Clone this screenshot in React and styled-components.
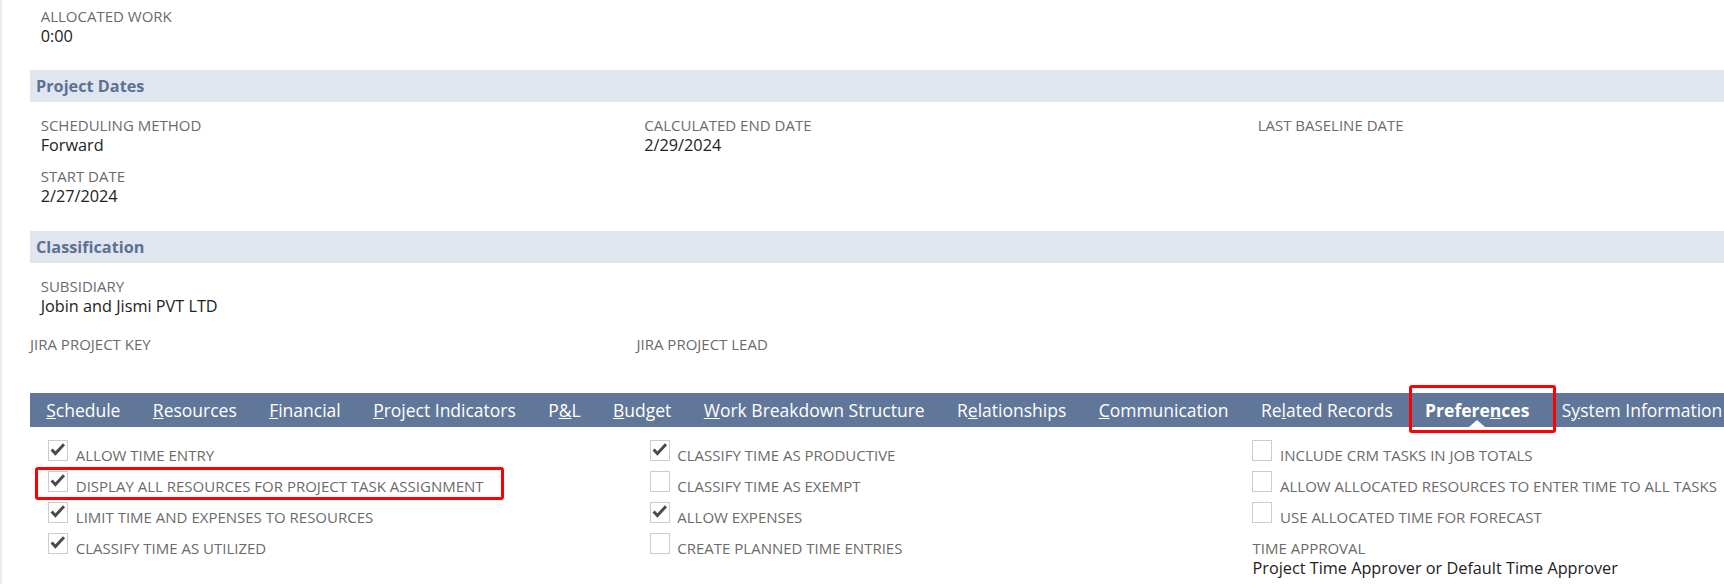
import React from 'react'
import styled, { createGlobalStyle } from 'styled-components'

const LABEL = '#6b6b6b'
const VALUE = '#222222'
const HEADER_BG = '#e0e6ef'
const HEADER_TEXT = '#5d7192'
const TAB_BG = '#607799'
const MARK_RED = '#ff0000'

const GlobalStyle = createGlobalStyle`
  html, body {
    margin: 0;
    padding: 0;
    background: #ffffff;
  }
  body {
    font-family: 'Open Sans', 'Liberation Sans', sans-serif;
    overflow: hidden;
  }
`

const Page = styled.div`
  width: 1724px;
  height: 584px;
  overflow: hidden;
  box-sizing: border-box;
  border-left: 2px solid #ececec;
  padding: 7px 0 0 28px;
`

const FieldGrid = styled.div`
  display: grid;
  grid-template-columns: ${p => p.$cols};
  padding-left: ${p => p.$inset || 0}px;
  margin-top: ${p => p.$top || 0}px;
`

const FieldColumn = styled.div`
  display: flex;
  flex-direction: column;
  gap: 11.5px;
`

const Field = styled.div`
  display: flex;
  flex-direction: column;
  margin-top: ${p => p.$top || 0}px;
`

const Label = styled.div`
  font-size: 15px;
  line-height: 19px;
  color: ${LABEL};
  text-transform: uppercase;
  white-space: nowrap;
`

const Value = styled.div`
  font-size: 16.25px;
  line-height: 21px;
  min-height: 21px;
  color: ${VALUE};
  white-space: nowrap;
`

const SectionHeader = styled.div`
  height: 32px;
  margin-top: ${p => p.$top}px;
  display: flex;
  align-items: center;
  padding-left: 6px;
  background: ${HEADER_BG};
  color: ${HEADER_TEXT};
  font-size: 16.25px;
  font-weight: 700;
`

const TabBar = styled.div`
  display: flex;
  height: 34.5px;
  margin-top: 18px;
  background: ${TAB_BG};
  white-space: nowrap;
`

const Tab = styled.div`
  position: relative;
  flex-shrink: 0;
  display: flex;
  align-items: center;
  padding: 0 16.2px;
  color: #ffffff;
  font-size: 17.5px;
  font-weight: ${p => (p.$active ? 700 : 400)};
`

const Caret = styled.span`
  position: absolute;
  bottom: 0;
  left: 50%;
  transform: translateX(-50%);
  border-left: 8px solid transparent;
  border-right: 8px solid transparent;
  border-bottom: 7px solid #ffffff;
`

const TabMark = styled.span`
  position: absolute;
  left: 0;
  right: -10.5px;
  top: -8px;
  bottom: -5.5px;
  border: 3px solid ${MARK_RED};
  border-radius: 3px;
  pointer-events: none;
`

const CheckGrid = styled.div`
  display: grid;
  grid-template-columns: 601.5px 602.7px 1fr;
  padding-left: 18.3px;
  margin-top: 13px;
`

const CheckColumn = styled.div`
  display: flex;
  flex-direction: column;
`

const CheckRow = styled.div`
  position: relative;
  display: flex;
  align-items: flex-start;
  height: 31px;
`

const Box = styled.span`
  flex-shrink: 0;
  width: 20px;
  height: 21px;
  box-sizing: border-box;
  border: 1px solid #cccccc;
  background: #ffffff;
  display: flex;
`

const CheckLabel = styled.span`
  margin: 6px 0 0 7.5px;
  font-size: 15px;
  line-height: 19px;
  color: ${LABEL};
  white-space: nowrap;
`

const RowMark = styled.span`
  position: absolute;
  left: -13.3px;
  top: -4.3px;
  width: 469px;
  height: 33.5px;
  box-sizing: border-box;
  border: 3px solid ${MARK_RED};
  border-radius: 3px;
  pointer-events: none;
`

const tabs = [
  ['Schedule', 0],
  ['Resources', 0],
  ['Financial', 0],
  ['Project Indicators', 0],
  ['P&L', 1],
  ['Budget', 0],
  ['Work Breakdown Structure', 0],
  ['Relationships', 1],
  ['Communication', 0],
  ['Related Records', 2],
  ['Preferences', 7],
  ['System Information', 1],
]

const checkColumns = [
  [
    ['ALLOW TIME ENTRY', true],
    ['DISPLAY ALL RESOURCES FOR PROJECT TASK ASSIGNMENT', true, true],
    ['LIMIT TIME AND EXPENSES TO RESOURCES', true],
    ['CLASSIFY TIME AS UTILIZED', true],
  ],
  [
    ['CLASSIFY TIME AS PRODUCTIVE', true],
    ['CLASSIFY TIME AS EXEMPT', false],
    ['ALLOW EXPENSES', true],
    ['CREATE PLANNED TIME ENTRIES', false],
  ],
  [
    ['INCLUDE CRM TASKS IN JOB TOTALS', false],
    ['ALLOW ALLOCATED RESOURCES TO ENTER TIME TO ALL TASKS', false],
    ['USE ALLOCATED TIME FOR FORECAST', false],
  ],
]

const CheckIcon = () => (
  <svg width="18" height="19" viewBox="0 0 18 19">
    <path
      d="M2.6 8.6 L6.4 12.6 L15 3.2"
      fill="none"
      stroke="#4a4a4a"
      strokeWidth="2.9"
      strokeLinejoin="miter"
    />
  </svg>
)

const AccessKey = ({ text, at }) => (
  <>
    {text.slice(0, at)}
    <u>{text[at]}</u>
    {text.slice(at + 1)}
  </>
)

const Checkbox = ({ text, checked, marked }) => (
  <CheckRow>
    <Box>{checked && <CheckIcon />}</Box>
    <CheckLabel>{text}</CheckLabel>
    {marked && <RowMark />}
  </CheckRow>
)

export default function App() {
  return (
    <Page>
      <GlobalStyle />
      <FieldGrid $cols="603.6px 1fr" $inset={10.7}>
        <Field>
          <Label>Allocated Work</Label>
          <Value>0:00</Value>
        </Field>
      </FieldGrid>

      <SectionHeader $top={23}>Project Dates</SectionHeader>
      <FieldGrid $cols="603.6px 613.4px 1fr" $inset={10.7} $top={13.5}>
        <FieldColumn>
          <Field>
            <Label>Scheduling Method</Label>
            <Value>Forward</Value>
          </Field>
          <Field>
            <Label>Start Date</Label>
            <Value>2/27/2024</Value>
          </Field>
        </FieldColumn>
        <Field>
          <Label>Calculated End Date</Label>
          <Value>2/29/2024</Value>
        </Field>
        <Field>
          <Label>Last Baseline Date</Label>
          <Value />
        </Field>
      </FieldGrid>

      <SectionHeader $top={24}>Classification</SectionHeader>
      <FieldGrid $cols="603.6px 1fr" $inset={10.7} $top={13.5}>
        <Field>
          <Label>Subsidiary</Label>
          <Value>Jobin and Jismi PVT LTD</Value>
        </Field>
      </FieldGrid>
      <FieldGrid $cols="606.5px 1fr" $top={18}>
        <Field>
          <Label>Jira Project Key</Label>
          <Value />
        </Field>
        <Field>
          <Label>Jira Project Lead</Label>
          <Value />
        </Field>
      </FieldGrid>

      <TabBar>
        {tabs.map(([name, at]) => {
          const active = name === 'Preferences'
          return (
            <Tab key={name} $active={active}>
              <AccessKey text={name} at={at} />
              {active && <Caret />}
              {active && <TabMark />}
            </Tab>
          )
        })}
      </TabBar>

      <CheckGrid>
        {checkColumns.map((rows, i) => (
          <CheckColumn key={i}>
            {rows.map(([text, checked, marked]) => (
              <Checkbox key={text} text={text} checked={checked} marked={marked} />
            ))}
            {i === 2 && (
              <Field $top={6}>
                <Label>Time Approval</Label>
                <Value>Project Time Approver or Default Time Approver</Value>
              </Field>
            )}
          </CheckColumn>
        ))}
      </CheckGrid>
    </Page>
  )
}
